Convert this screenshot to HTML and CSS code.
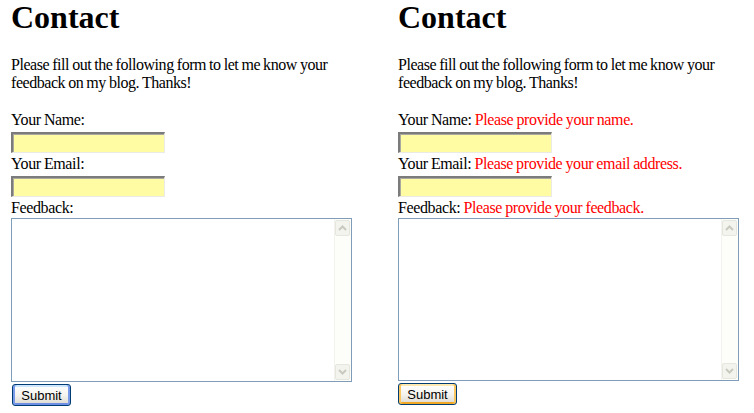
FILE: index.html
```html
<!DOCTYPE html>
<html>
<head>
<meta charset="utf-8">
<title>Contact</title>
<link rel="stylesheet" href="styles.css">
</head>
<body>
<div class="page">
  <section class="panel">
    <h1 class="title">Contact</h1>
    <p class="intro">Please fill out the following form to let me know your feedback on my blog. Thanks!</p>
    <form class="form">
      <label class="label">Your Name:</label>
      <div class="field"></div>
      <label class="label">Your Email:</label>
      <div class="field"></div>
      <label class="label">Feedback:</label>
      <div class="area">
        <div class="area-body"></div>
        <div class="scroll">
          <div class="sbtn"><svg width="9" height="6" viewBox="0 0 9 6"><path d="M1 5 L4.5 1.5 L8 5" fill="none" stroke="#c9c9c0" stroke-width="2"/></svg></div>
          <div class="track"></div>
          <div class="sbtn"><svg width="9" height="6" viewBox="0 0 9 6"><path d="M1 1 L4.5 4.5 L8 1" fill="none" stroke="#c9c9c0" stroke-width="2"/></svg></div>
        </div>
      </div>
      <div class="btnrow"><span class="submit focus">Submit</span></div>
    </form>
  </section>
  <section class="panel">
    <h1 class="title">Contact</h1>
    <p class="intro">Please fill out the following form to let me know your feedback on my blog. Thanks!</p>
    <form class="form">
      <label class="label">Your Name: <span class="err">Please provide your name.</span></label>
      <div class="field"></div>
      <label class="label">Your Email: <span class="err">Please provide your email address.</span></label>
      <div class="field"></div>
      <label class="label">Feedback: <span class="err">Please provide your feedback.</span></label>
      <div class="area area-r">
        <div class="area-body"></div>
        <div class="scroll">
          <div class="sbtn"><svg width="9" height="6" viewBox="0 0 9 6"><path d="M1 5 L4.5 1.5 L8 5" fill="none" stroke="#c9c9c0" stroke-width="2"/></svg></div>
          <div class="track"></div>
          <div class="sbtn"><svg width="9" height="6" viewBox="0 0 9 6"><path d="M1 1 L4.5 4.5 L8 1" fill="none" stroke="#c9c9c0" stroke-width="2"/></svg></div>
        </div>
      </div>
      <div class="btnrow btnrow-r"><span class="submit hover">Submit</span></div>
    </form>
  </section>
</div>
</body>
</html>
```

FILE: styles.css
```css
html, body {
  margin: 0;
  padding: 0;
  background: #ffffff;
}
body {
  font-family: "Liberation Serif", "Times New Roman", serif;
  font-size: 16px;
  color: #000;
}
.page {
  display: grid;
  grid-template-columns: 387px 367px;
}
.panel {
  padding-left: 11px;
}
.title {
  margin: 0;
  font-size: 32px;
  line-height: 35px;
  font-weight: bold;
}
.intro {
  margin: 21px 0 19px;
  width: 345px;
  line-height: 18px;
  letter-spacing: -0.45px;
  word-spacing: -0.5px;
}
.form {
  display: flex;
  flex-direction: column;
  align-items: flex-start;
  margin: 0;
}
.label {
  display: block;
  line-height: 18px;
  height: 18px;
  white-space: nowrap;
  letter-spacing: -0.38px;
  word-spacing: -0.5px;
}
.err {
  color: #ff0000;
}
.field {
  box-sizing: border-box;
  width: 154px;
  height: 21px;
  margin: 3px 0 2px;
  background: #fffca3;
  border-style: solid;
  border-width: 2px 1px 1px 2px;
  border-color: #7b7b7b #ebeae4 #ebeae4 #7b7b7b;
  box-shadow: inset 1px 1px 0 #a9a9a0;
}
.area {
  box-sizing: border-box;
  width: 341px;
  height: 164px;
  margin-top: 1px;
  border: 1px solid #7f9db9;
  display: flex;
  background: #fff;
}
.area-r {
  width: 341px;
  height: 163px;
}
.area-body {
  flex: 1;
}
.scroll {
  width: 17px;
  display: flex;
  flex-direction: column;
  background: #fdfdf9;
  border-left: 1px solid #f3f3ee;
  box-sizing: border-box;
  padding: 1px 1px 1px 0;
}
.track {
  flex: 1;
}
.sbtn {
  box-sizing: border-box;
  height: 16px;
  border: 1px solid #e6e6de;
  border-radius: 2px;
  background: #f4f4ef;
  display: flex;
  align-items: center;
  justify-content: center;
}
.btnrow {
  margin-top: 2px;
  padding-left: 1px;
}
.btnrow-r {
  margin-top: 2px;
  padding-left: 0;
}
.submit {
  box-sizing: border-box;
  display: flex;
  align-items: center;
  justify-content: center;
  width: 59px;
  height: 22px;
  border: 1px solid #003c74;
  border-radius: 3px;
  font-family: "Liberation Sans", Arial, sans-serif;
  font-size: 13px;
  color: #000;
  background: linear-gradient(#ffffff 0%, #f5f4ef 50%, #e3e1d9 85%, #d6d0c5 100%);
}
.submit.focus {
  box-shadow: inset 2px 0 0 #7a9bea, inset -2px 0 0 #7a9bea, inset 0 2px 0 #cee7ff, inset 0 -2px 0 #6d8ee3;
}
.submit.hover {
  box-shadow: inset 2px 0 0 #fbc761, inset -2px 0 0 #fbc761, inset 0 2px 0 #ffe9b0, inset 0 -2px 0 #f0a824;
}
```
